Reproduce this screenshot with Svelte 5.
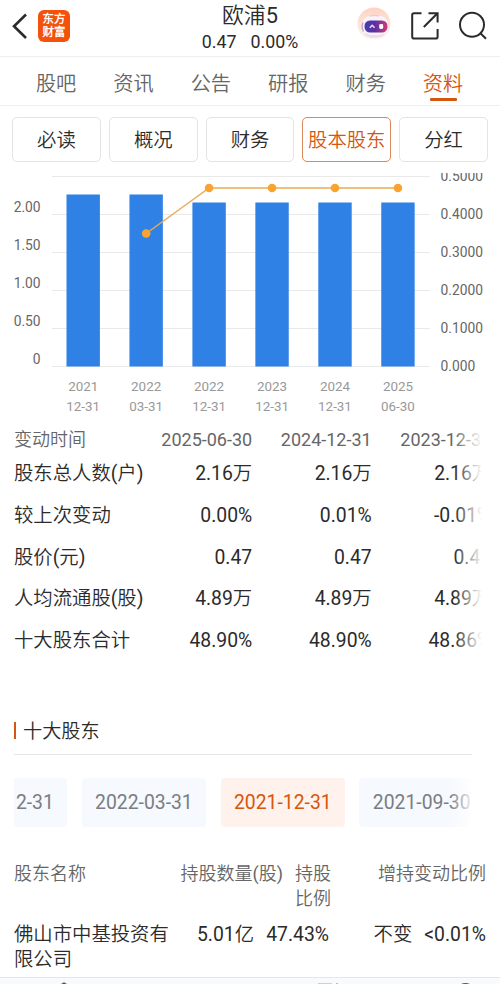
<script>
  const tabs = ['股吧', '资讯', '公告', '研报', '财务', '资料'];
  const sections = ['必读', '概况', '财务', '股本股东', '分红'];
  let activeTab = '资料';
  let activeSection = '股本股东';
  let activeDate = '2021-12-31';

  // chart geometry, in px of the svg
  const zeroY = 193.5;
  const gridLines = [3.5, 41.5, 79.5, 117.5, 155.5, 193.5];
  const leftAxis = [
    { label: '2.00', y: 39 },
    { label: '1.50', y: 77 },
    { label: '1.00', y: 115 },
    { label: '0.50', y: 153 },
    { label: '0', y: 191 },
  ];
  const rightAxis = [
    { label: '0.5000', y: 8 },
    { label: '0.4000', y: 45.5 },
    { label: '0.3000', y: 84 },
    { label: '0.2000', y: 122 },
    { label: '0.1000', y: 160 },
    { label: '0.000', y: 198 },
  ];
  const bars = [
    { year: '2021', day: '12-31', top: 21.5, price: null },
    { year: '2022', day: '03-31', top: 21.5, price: 60.5 },
    { year: '2022', day: '12-31', top: 29.5, price: 15 },
    { year: '2023', day: '12-31', top: 29.5, price: 15 },
    { year: '2024', day: '12-31', top: 29.5, price: 15 },
    { year: '2025', day: '06-30', top: 29.5, price: 15 },
  ].map((bar, i) => ({ ...bar, x: 83.2 + i * 62.95 }));

  const points = bars.filter((bar) => bar.price !== null);
  const linePoints = points.map((p) => `${p.x},${p.price}`).join(' ');

  const changes = [
    { label: '股东总人数(户)', values: ['2.16万', '2.16万', '2.16万'] },
    { label: '较上次变动', values: ['0.00%', '0.01%', '-0.01%'] },
    { label: '股价(元)', values: ['0.47', '0.47', '0.47'] },
    { label: '人均流通股(股)', values: ['4.89万', '4.89万', '4.89万'] },
    { label: '十大股东合计', values: ['48.90%', '48.90%', '48.86%'] },
  ];
  const changeDates = ['2025-06-30', '2024-12-31', '2023-12-31'];
  const dates = ['2022-12-31', '2022-03-31', '2021-12-31', '2021-09-30'];
</script>

<div class="screen">
  <header>
    <div class="left">
      <svg class="back" width="16" height="28" viewBox="0 0 16 28">
        <path d="M14 2.5 2 14.2 14 26" />
      </svg>
      <div class="logo"><span>东方</span><span>财富</span></div>
    </div>
    <div class="title">
      <h1>欧浦5</h1>
      <p><span>0.47</span><span>0.00%</span></p>
    </div>
    <div class="actions">
      <svg class="robot" width="36" height="36" viewBox="0 0 36 36">
        <defs>
          <linearGradient id="halo" x1="0" y1="0" x2="0" y2="1">
            <stop offset="0" stop-color="#ffd2c2" />
            <stop offset="0.6" stop-color="#fbe6e0" />
            <stop offset="1" stop-color="#fffaf8" />
          </linearGradient>
          <linearGradient id="visor" x1="0" y1="0" x2="1" y2="0">
            <stop offset="0" stop-color="#4a3cae" />
            <stop offset="0.45" stop-color="#5b2fa6" />
            <stop offset="1" stop-color="#d43a78" />
          </linearGradient>
        </defs>
        <circle cx="17" cy="18" r="16.5" fill="url(#halo)" />
        <ellipse cx="17.5" cy="28" rx="10" ry="4" fill="#eadfe6" />
        <rect x="5" y="10" width="26" height="19" rx="8.5" fill="#f8f3f7" />
        <path d="M6 16.5Q4 21 6.5 25.5" fill="none" stroke="#b7aac8" stroke-width="1.4" />
        <path d="M13 10.2Q17.5 8.4 22 10.2" fill="none" stroke="#ddd0dc" stroke-width="1.2" />
        <rect x="7.5" y="14.5" width="23" height="12" rx="5.5" fill="url(#visor)" />
        <path d="M12.8 21.8 15.2 19.4 17.6 21.8" fill="none" stroke="#e5d8ff" stroke-width="1.5" />
        <rect x="22.2" y="18" width="4" height="5" rx="1.4" fill="#fff" />
      </svg>
      <svg class="share" width="30" height="30" viewBox="0 0 30 30">
        <path d="M11.5 2.2H4Q2.2 2.2 2.2 4V25.8Q2.2 27.6 4 27.6H25.8Q27.6 27.6 27.6 25.8V18" />
        <path d="M18.5 2.2H27.6V11.5M27 2.8 13.8 16" />
      </svg>
      <svg class="search" width="30" height="30" viewBox="0 0 30 30">
        <circle cx="14" cy="13.8" r="12" />
        <path d="M22.4 22.2 28 27.8" />
      </svg>
    </div>
  </header>

  <nav class="tabs">
    {#each tabs as tab}
      <button class:active={activeTab === tab} on:click={() => (activeTab = tab)}>{tab}</button>
    {/each}
  </nav>

  <div class="sections">
    {#each sections as section}
      <button class:active={activeSection === section} on:click={() => (activeSection = section)}>
        {section}
      </button>
    {/each}
  </div>

  <svg class="chart" width="500" height="250" viewBox="0 0 500 250">
    {#each gridLines as y}
      <line class="grid" x1="52" x2="430" y1={y} y2={y} />
    {/each}
    {#each bars as bar}
      <rect class="bar" x={bar.x - 16.7} y={bar.top} width="33.4" height={zeroY - bar.top} />
      <text class="day" x={bar.x} y="218.4">{bar.year}</text>
      <text class="day" x={bar.x} y="238">{bar.day}</text>
    {/each}
    <polyline points={linePoints} />
    {#each points as point}
      <circle class="dot" cx={point.x} cy={point.price} r="4.3" />
    {/each}
    {#each leftAxis as tick}
      <text class="tick end" x="40.6" y={tick.y}>{tick.label}</text>
    {/each}
    {#each rightAxis as tick}
      <text class="tick" x="440.6" y={tick.y}>{tick.label}</text>
    {/each}
  </svg>

  <div class="changes">
    <div class="row head">
      <span>变动时间</span>
      {#each changeDates as date}
        <span class="value">{date}</span>
      {/each}
    </div>
    {#each changes as change}
      <div class="row">
        <span>{change.label}</span>
        {#each change.values as value}
          <span class="value">{value}</span>
        {/each}
      </div>
    {/each}
  </div>

  <section>
    <h2>十大股东</h2>
    <div class="dates">
      {#each dates as date}
        <button class:active={activeDate === date} on:click={() => (activeDate = date)}>{date}</button>
      {/each}
    </div>
    <div class="holder head">
      <span>股东名称</span>
      <span class="value">持股数量(股)</span>
      <span class="ratio">持股比例</span>
      <span class="value">增持变动比例</span>
    </div>
    <div class="holder">
      <span>佛山市中基投资有限公司</span>
      <span class="value amount">5.01亿</span>
      <span class="ratio">47.43%</span>
      <span class="value delta"><span>不变</span><span>&lt;0.01%</span></span>
    </div>
  </section>

  <footer>
    <svg width="500" height="7" viewBox="0 0 500 7">
      <path d="M59 8 64 5.2 69 8" />
      <path d="M318 6.5H332M337 5.5V8" />
      <path class="faint" d="M387 6.8H396M402 6V8" />
      <path d="M459 8Q465.5 3.6 472 8" />
    </svg>
  </footer>
</div>

<style>
  :global(body) {
    background: #fff;
  }
  .screen {
    display: flex;
    flex-direction: column;
    width: 500px;
    height: 984px;
    overflow: hidden;
    color: #2b2b2b;
    font-family: Roboto, 'Noto Sans CJK SC DemiLight', 'Noto Sans CJK SC', sans-serif;
    font-size: 19.35px;
  }
  .screen > * {
    flex-shrink: 0;
    box-sizing: border-box;
  }
  button {
    padding: 0;
    border: 0;
    background: none;
    color: inherit;
    font: inherit;
    white-space: nowrap;
    cursor: pointer;
  }
  h1, h2, p {
    margin: 0;
    font-weight: 400;
  }

  header {
    display: grid;
    grid-template-columns: 1fr auto 1fr;
    height: 57px;
    padding: 0 12px;
    border-bottom: 1px solid #eee;
  }
  .left {
    display: flex;
    align-items: center;
    gap: 10px;
    height: 52px;
  }
  .back, .share, .search {
    fill: none;
    stroke: #2b2b2b;
    stroke-width: 2;
  }
  .back {
    stroke-width: 2.6;
  }
  .logo {
    display: flex;
    flex-direction: column;
    justify-content: center;
    width: 32px;
    height: 32px;
    border-radius: 6px;
    background: #f4510b;
    color: #fff;
    font-size: 11.4px;
    font-weight: 700;
    line-height: 13px;
    text-align: center;
  }
  .title {
    text-align: center;
  }
  h1 {
    margin-top: 1px;
    font-size: 21.8px;
    line-height: 29px;
  }
  .title p {
    display: flex;
    gap: 14px;
    font-size: 17.8px;
    line-height: 24px;
  }
  .actions {
    display: flex;
    align-items: center;
    justify-content: flex-end;
    height: 50px;
  }
  .robot {
    margin-top: -2px;
  }
  .share {
    margin: 2px 18px 0 17px;
  }
  .search {
    margin-top: 2px;
  }

  .tabs {
    display: grid;
    grid-template-columns: repeat(6, 77.4px);
    height: 49px;
    padding-left: 17.4px;
    border-bottom: 1px solid #eee;
    color: #666;
    font-size: 20.2px;
  }
  .tabs button {
    display: flex;
    flex-direction: column;
    align-items: center;
    padding-top: 12px;
    line-height: 31px;
  }
  .tabs .active {
    color: #d4570f;
  }
  .tabs .active::after {
    content: '';
    width: 27px;
    height: 2.6px;
    margin-top: -1.6px;
    border-radius: 1px;
    background: #d4570f;
  }

  .sections {
    display: grid;
    grid-template-columns: repeat(5, 1fr);
    gap: 8.2px;
    height: 67px;
    padding: 11px 12.2px;
  }
  .sections button {
    padding-top: 2px;
    border: 1px solid #e4e4e6;
    border-radius: 5px;
    line-height: 41px;
  }
  .sections .active {
    border-color: #d98a5c;
    color: #d4570f;
  }

  .chart {
    display: block;
    overflow: hidden;
  }
  .grid {
    stroke: #e9e9e9;
  }
  .bar {
    fill: #3081e6;
  }
  polyline {
    fill: none;
    stroke: #e8ac57;
    stroke-width: 1.4;
  }
  .dot {
    fill: #f9a42f;
  }
  .tick {
    fill: #666;
    font-size: 13.8px;
  }
  .end {
    text-anchor: end;
  }
  .day {
    fill: #999;
    font-size: 13.4px;
    text-anchor: middle;
  }

  .changes {
    position: relative;
    width: 486px;
    height: 266px;
    margin-top: 4.4px;
    padding-left: 14px;
    overflow: hidden;
  }
  .changes::after {
    content: '';
    position: absolute;
    inset: 0 0 0 auto;
    width: 32px;
    background: linear-gradient(90deg, rgba(255, 255, 255, 0), #fff 88%);
  }
  .row {
    display: grid;
    grid-template-columns: 118.7px repeat(3, 119.5px);
    line-height: 41.6px;
    white-space: nowrap;
  }
  .row.head {
    line-height: 26px;
  }
  .head {
    color: #666;
    font-size: 18px;
  }
  .value {
    text-align: right;
  }

  section {
    height: 283.6px;
    padding: 16px 14px 0;
  }
  h2 {
    display: flex;
    align-items: center;
    gap: 7px;
    width: 458px;
    height: 42px;
    padding-bottom: 3px;
    border-bottom: 1px solid #e6e6e6;
    font-size: 19.2px;
  }
  h2::before {
    content: '';
    width: 2px;
    height: 17px;
    background: #d4570f;
  }
  .dates {
    position: relative;
    display: flex;
    justify-content: flex-end;
    gap: 14.3px;
    width: 456px;
    height: 49px;
    margin: 23px 0 34px;
    overflow: hidden;
  }
  .dates::after {
    content: '';
    position: absolute;
    inset: 0 0 0 auto;
    width: 20px;
    background: linear-gradient(90deg, rgba(255, 255, 255, 0), rgba(255, 255, 255, 0.8));
  }
  .dates button {
    flex: 0 0 124.6px;
    border-radius: 4px;
    background: #f6f9fe;
    color: #7a7d82;
  }
  .dates button:last-child {
    margin-right: -14px;
  }
  .dates .active {
    background: #fff1eb;
    color: #d4570f;
  }
  .holder {
    display: grid;
    grid-template-columns: 160px 109px 46px 1fr;
    height: 60.5px;
    line-height: 25px;
  }
  .ratio {
    justify-self: end;
    white-space: nowrap;
  }
  .head .ratio {
    width: 36px;
    margin-right: -2px;
    white-space: normal;
  }
  .amount {
    padding-right: 29px;
  }
  .delta {
    display: flex;
    justify-content: flex-end;
    gap: 12px;
  }

  footer {
    height: 7px;
    border-top: 1px solid #dfe7f1;
    background: #f8fafd;
  }
  footer svg {
    display: block;
    fill: none;
    stroke: #555;
    stroke-width: 1.5;
  }
  .faint {
    stroke: #aaa;
  }
</style>
